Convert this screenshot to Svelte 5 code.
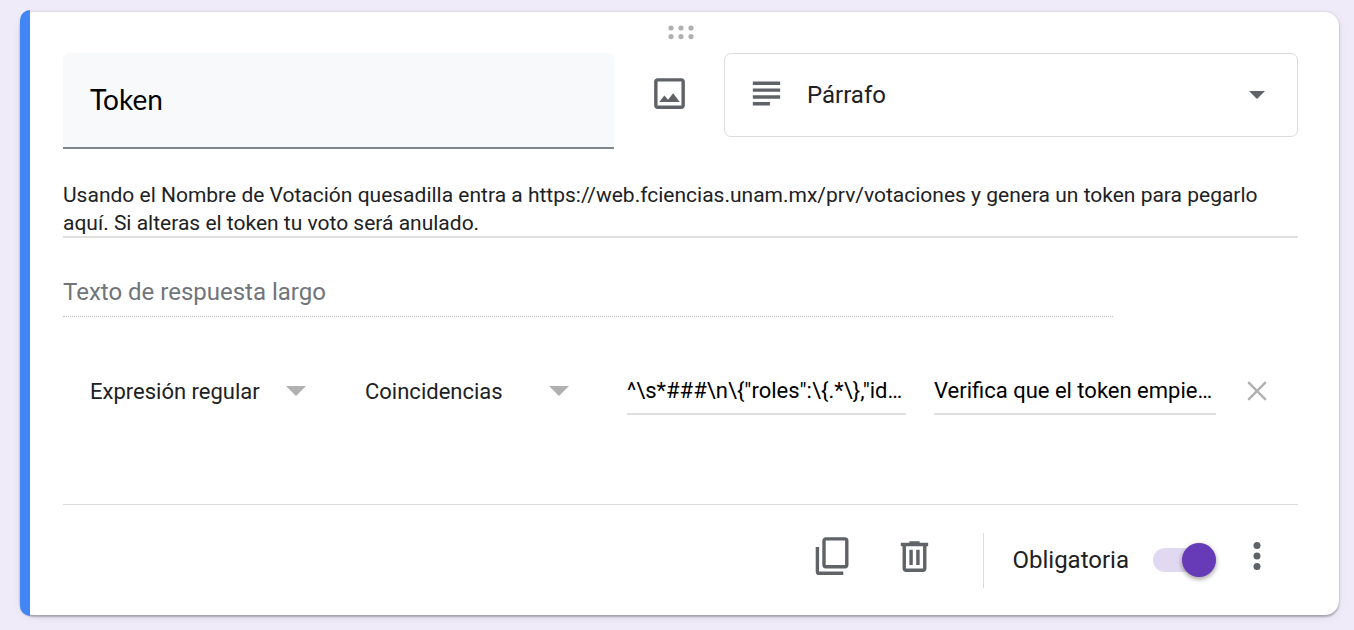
<script>
  let title = $state('Token');
  let description = $state(
    'Usando el Nombre de Votación quesadilla entra a https://web.fciencias.unam.mx/prv/votaciones y genera un token para pegarlo aquí. Si alteras el token tu voto será anulado.'
  );
  let pattern = $state('^\\s*###\\n\\{"roles":\\{.*\\},"id…');
  let message = $state('Verifica que el token empie…');
  let required = $state(true);
</script>

<main class="card">
  <div class="accent"></div>
  <div class="body">
    <div class="drag">
      <svg width="28" height="16" viewBox="0 0 28 16" aria-hidden="true">
        {#each [4, 14, 24] as x}
          <circle cx={x} cy="4" r="2.6" />
          <circle cx={x} cy="12.6" r="2.6" />
        {/each}
      </svg>
    </div>

    <div class="head">
      <input class="title" type="text" aria-label="Pregunta" bind:value={title} />
      <button class="icon image" type="button" aria-label="Añadir imagen">
        <svg width="41" height="41" viewBox="0 0 24 24">
          <path d="M19 5v14H5V5h14m0-2H5c-1.1 0-2 .9-2 2v14c0 1.1.9 2 2 2h14c1.1 0 2-.9 2-2V5c0-1.1-.9-2-2-2z" />
          <path d="M14.14 11.86l-3 3.87L9 13.14 6 17h12l-3.86-5.14z" />
        </svg>
      </button>
      <div class="picker type">
        <svg class="lines" width="41" height="41" viewBox="0 0 24 24" aria-hidden="true">
          <path d="M14 17H4v2h10v-2zm6-8H4v2h16V9zM4 15h16v-2H4v2zM4 5v2h16V5H4z" />
        </svg>
        <select aria-label="Tipo de pregunta"><option>Párrafo</option></select>
        <svg class="arrow" width="16" height="8" viewBox="0 0 16 8" aria-hidden="true"><path d="M0 0h16L8 8z" /></svg>
      </div>
    </div>

    <textarea class="description" rows="2" aria-label="Descripción" bind:value={description}></textarea>

    <input class="answer" type="text" aria-label="Respuesta" placeholder="Texto de respuesta largo" disabled />

    <div class="rules">
      <div class="picker kind">
        <select aria-label="Tipo de validación"><option>Expresión regular</option></select>
        <svg class="arrow" width="20" height="10" viewBox="0 0 20 10" aria-hidden="true"><path d="M0 0h20L10 10z" /></svg>
      </div>
      <div class="picker condition">
        <select aria-label="Condición"><option>Coincidencias</option></select>
        <svg class="arrow" width="20" height="10" viewBox="0 0 20 10" aria-hidden="true"><path d="M0 0h20L10 10z" /></svg>
      </div>
      <input class="pattern" type="text" aria-label="Patrón" bind:value={pattern} />
      <input class="message" type="text" aria-label="Texto de error" bind:value={message} />
      <button class="icon remove" type="button" aria-label="Quitar validación">
        <svg width="20" height="20" viewBox="0 0 20 20"><path d="M1.2 1.2l17.6 17.6M18.8 1.2l-17.6 17.6" /></svg>
      </button>
    </div>

    <footer>
      <button class="icon raised copy" type="button" aria-label="Duplicar">
        <svg width="34" height="38" viewBox="0 0 34 38">
          <rect x="9" y="1.9" width="22.8" height="27.8" rx="1.9" />
          <path d="M2.4 10v24.4q0 1.9 1.9 1.9h24" />
        </svg>
      </button>
      <button class="icon raised" type="button" aria-label="Eliminar">
        <svg width="41" height="41" viewBox="0 0 24 24">
          <path d="M15 4V3H9v1H4v2h1v13c0 1.1.9 2 2 2h10c1.1 0 2-.9 2-2V6h1V4h-5zm2 15H7V6h10v13zM9 8h2v9H9zm4 0h2v9h-2z" />
        </svg>
      </button>
      <div class="required">
        <label for="required">Obligatoria</label>
        <input id="required" type="checkbox" role="switch" bind:checked={required} />
      </div>
      <button class="icon raised" type="button" aria-label="Más opciones">
        <svg width="8" height="30" viewBox="0 0 8 30">
          <circle cx="4" cy="4.6" r="3.5" />
          <circle cx="4" cy="15" r="3.5" />
          <circle cx="4" cy="25.4" r="3.5" />
        </svg>
      </button>
    </footer>
  </div>
</main>

<style>
  :global(body) {
    margin: 0;
    background: #f0ebf8;
    font-family: Roboto, 'Liberation Sans', sans-serif;
  }

  .card {
    display: flex;
    margin: 12px 15px 14px 20px;
    border-radius: 14px;
    background: #fff;
    color: #202124;
    box-shadow:
      0 2px 2px rgba(0, 0, 0, 0.24),
      0 0 2px rgba(0, 0, 0, 0.16),
      0 2px 8px rgba(0, 0, 0, 0.08);
  }

  .accent {
    flex: none;
    width: 10px;
    margin: -2px 0 -1px;
    border-radius: 14px 0 0 14px;
    background: #4285f4;
  }

  .body {
    flex: 1;
    min-width: 0;
    padding: 0 41px 0 33px;
  }

  input,
  select,
  textarea,
  button {
    box-sizing: border-box;
    min-width: 0;
    margin: 0;
    padding: 0;
    border: 0;
    border-radius: 0;
    outline: 0;
    background: none;
    color: inherit;
    font: inherit;
  }

  svg {
    display: block;
    flex: none;
    fill: #5f6368;
  }

  .drag {
    display: flex;
    justify-content: center;
    height: 29px;
    padding-top: 12px;
  }

  .drag svg {
    fill: #b0b0b0;
  }

  .head {
    display: grid;
    grid-template-columns: minmax(0, 551fr) 110px minmax(0, 574fr);
    align-items: start;
  }

  .title {
    width: 100%;
    height: 96px;
    padding: 0 27px 2px;
    border-bottom: 2px solid #80868b;
    border-radius: 7px 7px 0 0;
    background: #f8f9fa;
    color: #000;
    font-family: Lato, sans-serif;
    font-size: 28px;
  }

  .icon {
    display: flex;
    flex: none;
    align-items: center;
    justify-content: center;
    width: 41px;
    height: 41px;
    cursor: pointer;
  }

  .image {
    width: 110px;
    height: 81px;
  }

  .picker {
    display: grid;
    align-items: center;
  }

  .picker > * {
    grid-area: 1 / 1;
  }

  .picker svg {
    pointer-events: none;
  }

  .picker select {
    width: 100%;
    height: 100%;
    appearance: none;
    cursor: pointer;
  }

  .arrow {
    justify-self: end;
  }

  .type {
    height: 84px;
    box-sizing: border-box;
    border: 1px solid #dadce0;
    border-radius: 7px;
    font-size: 24px;
  }

  .type select {
    padding: 0 60px 0 82px;
  }

  .type .lines {
    margin: 0 0 4px 21px;
  }

  .type .arrow {
    margin-right: 32px;
  }

  .description {
    display: block;
    width: 100%;
    height: 57px;
    margin-top: 32px;
    border-bottom: 2px solid #dfdfdf;
    resize: none;
    overflow: hidden;
    font-size: 21px;
    line-height: 28px;
  }

  .answer {
    display: block;
    width: 85%;
    height: 50px;
    margin-top: 29px;
    border-bottom: 1px dotted #bdbdbd;
    font-size: 24px;
  }

  .answer::placeholder {
    color: #70757a;
    opacity: 1;
  }

  .rules {
    display: grid;
    grid-template-columns:
      minmax(0, 216fr) 59px minmax(0, 204fr) 58px
      minmax(0, 279fr) 28px minmax(0, 282fr) 82px;
    align-items: center;
    height: 48px;
    margin: 50px 0 89px;
    padding-left: 27px;
    font-size: 22px;
  }

  .rules .arrow {
    fill: #b0b0b0;
  }

  .rules > input {
    height: 48px;
    border-bottom: 2px solid #dfdfdf;
    color: #000;
    text-overflow: ellipsis;
  }

  .kind {
    grid-column: 1;
  }

  .condition {
    grid-column: 3;
  }

  .pattern {
    grid-column: 5;
  }

  .message {
    grid-column: 7;
  }

  .remove {
    grid-column: 8;
    width: 82px;
  }

  .remove svg {
    stroke: #b0b0b0;
    stroke-width: 2.4;
  }

  footer {
    display: flex;
    align-items: center;
    justify-content: flex-end;
    height: 110px;
    padding-right: 21px;
    border-top: 1px solid #dadce0;
    font-size: 24px;
  }

  .raised {
    margin-bottom: 8px;
  }

  .raised + .raised {
    margin-left: 42px;
  }

  .copy svg {
    fill: none;
    stroke: #5f6368;
    stroke-width: 3.4;
  }

  .required {
    display: flex;
    align-items: center;
    gap: 24px;
    height: 55px;
    margin: 0 20px 0 48px;
    padding-left: 28px;
    border-left: 1px solid #dadce0;
  }

  .required input {
    width: 63px;
    height: 24px;
    border-radius: 12px;
    background: #dadce0;
    appearance: none;
    cursor: pointer;
  }

  .required input::before {
    content: '';
    display: block;
    width: 34px;
    height: 34px;
    margin: -5px 0 0;
    border-radius: 50%;
    background: #fff;
    box-shadow: 0 2px 5px rgba(0, 0, 0, 0.4);
  }

  .required input:checked {
    background: #e1d8f1;
  }

  .required input:checked::before {
    margin-left: 29px;
    background: #673ab7;
  }
</style>
